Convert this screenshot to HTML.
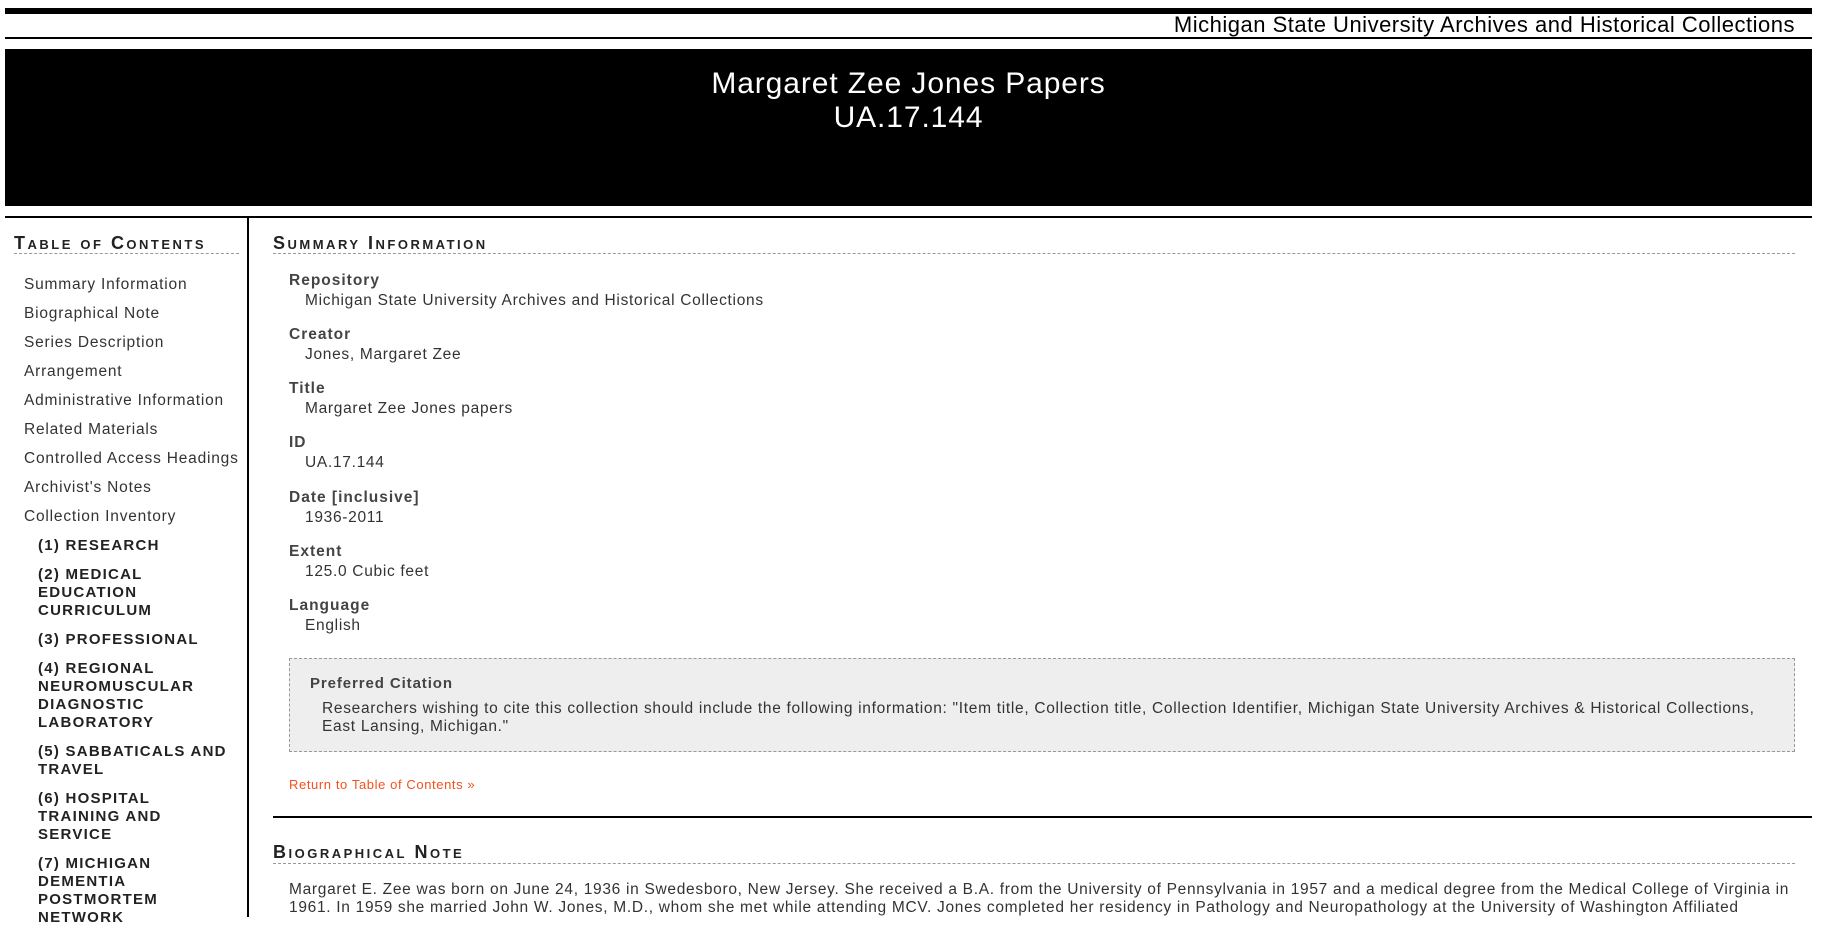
<!DOCTYPE html>
<html><head><meta charset="utf-8"><style>
*{margin:0;padding:0;box-sizing:border-box}
body{width:1822px;height:914px;overflow:hidden;background:#fff;font-family:"Liberation Sans",Arial,sans-serif;color:#333;position:relative}
.a{position:absolute;white-space:nowrap}
.h{font-weight:bold;font-variant:small-caps;font-size:18px;letter-spacing:2.5px;color:#222}
.dash{position:absolute;border-top:1px dashed #999;height:0}
.toc{position:absolute;left:24px;font-size:15.5px;color:#333;letter-spacing:0.8px;white-space:nowrap}
.sub{position:absolute;left:38px;font-size:15px;font-weight:bold;line-height:18px;color:#222;letter-spacing:1.25px;white-space:nowrap}
.lab{position:absolute;left:289px;font-weight:bold;font-size:15.5px;color:#444;letter-spacing:1px}
.val{position:absolute;left:305px;font-size:15.5px;color:#333;letter-spacing:0.7px;white-space:nowrap}
</style></head><body>
<div style="position:absolute;left:5px;top:8px;width:1807px;height:6px;background:#000"></div>
<div class="a" style="right:27px;top:12px;font-size:22px;color:#000;letter-spacing:0.5px">Michigan State University Archives and Historical Collections</div>
<div style="position:absolute;left:5px;top:37px;width:1807px;height:2px;background:#000"></div>
<div style="position:absolute;left:5px;top:49px;width:1807px;height:157px;background:#000"></div>
<div class="a" style="left:5px;width:1807px;top:67px;text-align:center;color:#fff;font-size:30px;line-height:34px;letter-spacing:0.9px">Margaret Zee Jones Papers<br>UA.17.144</div>
<div style="position:absolute;left:5px;top:216px;width:1807px;height:2px;background:#000"></div>
<div style="position:absolute;left:247px;top:217px;width:2px;height:700px;background:#000"></div>

<div class="a h" style="left:14px;top:233px">Table of Contents</div>
<div class="dash" style="left:14px;top:253px;width:225px"></div>
<div class="toc" style="top:276px">Summary Information</div>
<div class="toc" style="top:305px">Biographical Note</div>
<div class="toc" style="top:334px">Series Description</div>
<div class="toc" style="top:363px">Arrangement</div>
<div class="toc" style="top:392px">Administrative Information</div>
<div class="toc" style="top:421px">Related Materials</div>
<div class="toc" style="top:450px">Controlled Access Headings</div>
<div class="toc" style="top:479px">Archivist's Notes</div>
<div class="toc" style="top:508px">Collection Inventory</div>
<div class="sub" style="top:537px">(1) RESEARCH</div>
<div class="sub" style="top:566px">(2) MEDICAL<br>EDUCATION<br>CURRICULUM</div>
<div class="sub" style="top:631px">(3) PROFESSIONAL</div>
<div class="sub" style="top:660px">(4) REGIONAL<br>NEUROMUSCULAR<br>DIAGNOSTIC<br>LABORATORY</div>
<div class="sub" style="top:743px">(5) SABBATICALS AND<br>TRAVEL</div>
<div class="sub" style="top:790px">(6) HOSPITAL<br>TRAINING AND<br>SERVICE</div>
<div class="sub" style="top:855px">(7) MICHIGAN<br>DEMENTIA<br>POSTMORTEM<br>NETWORK</div>

<div class="a h" style="left:273px;top:233px">Summary Information</div>
<div class="dash" style="left:273px;top:253px;width:1522px"></div>
<div class="lab" style="top:272px">Repository</div><div class="val" style="top:292px">Michigan State University Archives and Historical Collections</div>
<div class="lab" style="top:326px">Creator</div><div class="val" style="top:346px">Jones, Margaret Zee</div>
<div class="lab" style="top:380px">Title</div><div class="val" style="top:400px">Margaret Zee Jones papers</div>
<div class="lab" style="top:434px">ID</div><div class="val" style="top:454px">UA.17.144</div>
<div class="lab" style="top:489px">Date [inclusive]</div><div class="val" style="top:509px">1936-2011</div>
<div class="lab" style="top:543px">Extent</div><div class="val" style="top:563px">125.0 Cubic feet</div>
<div class="lab" style="top:597px">Language</div><div class="val" style="top:617px">English</div>

<div style="position:absolute;left:289px;top:658px;width:1506px;height:94px;background:#eee;border:1px dashed #999"></div>
<div class="a" style="left:310px;top:675px;font-weight:bold;font-size:15px;color:#444;letter-spacing:0.9px">Preferred Citation</div>
<div class="a" style="left:322px;top:700px;font-size:15.5px;line-height:18px;color:#333;letter-spacing:0.7px">Researchers wishing to cite this collection should include the following information: "Item title, Collection title, Collection Identifier, Michigan State University Archives &amp; Historical Collections,<br>East Lansing, Michigan."</div>
<div class="a" style="left:289px;top:777px;font-size:13px;color:#f4511e;letter-spacing:0.6px">Return to Table of Contents »</div>
<div style="position:absolute;left:273px;top:816px;width:1539px;height:2px;background:#000"></div>
<div class="a h" style="left:273px;top:842px">Biographical Note</div>
<div class="dash" style="left:273px;top:863px;width:1522px"></div>
<div class="a" style="left:289px;top:881px;font-size:15.5px;line-height:18px;color:#333;letter-spacing:0.7px">Margaret E. Zee was born on June 24, 1936 in Swedesboro, New Jersey. She received a B.A. from the University of Pennsylvania in 1957 and a medical degree from the Medical College of Virginia in<br>1961. In 1959 she married John W. Jones, M.D., whom she met while attending MCV. Jones completed her residency in Pathology and Neuropathology at the University of Washington Affiliated</div>
</body></html>
